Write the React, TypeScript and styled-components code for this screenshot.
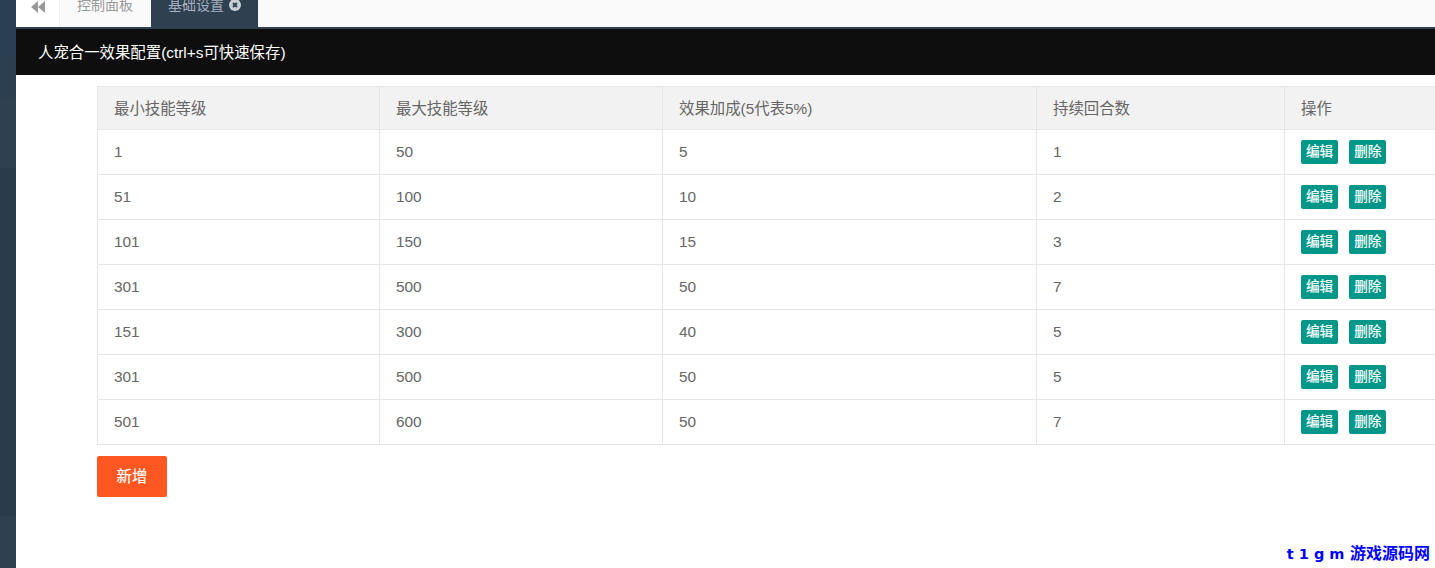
import React from 'react'
import styled, { createGlobalStyle } from 'styled-components'

const rows = [
  { min: '1', max: '50', bonus: '5', turns: '1' },
  { min: '51', max: '100', bonus: '10', turns: '2' },
  { min: '101', max: '150', bonus: '15', turns: '3' },
  { min: '301', max: '500', bonus: '50', turns: '7' },
  { min: '151', max: '300', bonus: '40', turns: '5' },
  { min: '301', max: '500', bonus: '50', turns: '5' },
  { min: '501', max: '600', bonus: '50', turns: '7' },
]

const Global = createGlobalStyle`
  html, body {
    margin: 0;
    height: 100%;
    overflow: hidden;
    background: #fff;
    font-family: "Liberation Sans", "Noto Sans CJK SC", sans-serif;
  }
`

const Page = styled.div`
  width: 1435px;
  height: 568px;
  display: flex;
  overflow: hidden;
  position: relative;
`

const Side = styled.div`
  width: 16px;
  flex: none;
  background: linear-gradient(
    180deg,
    #2a4052 0,
    #2b3f51 99px,
    #2f4050 99px,
    #2f4050 168px,
    #2a3b4b 168px,
    #2a3b4b 516px,
    #2f4050 516px
  );
`

const Main = styled.div`
  flex: 1;
  min-width: 0;
  display: flex;
  flex-direction: column;
`

const TabBar = styled.div`
  height: 27px;
  flex: none;
  display: flex;
  background: #fafafa;
  border-bottom: 2px solid #2f4050;
`

const BackTab = styled.div`
  width: 43px;
  flex: none;
  background: #fff;
  padding-left: 15px;
  box-sizing: border-box;
`

const Tab = styled.div<{ active?: boolean }>`
  box-sizing: border-box;
  padding-left: 17px;
  display: flex;
  align-items: flex-start;
  gap: 5px;
  font-size: 14px;
  line-height: 12px;
  color: ${(p) => (p.active ? '#a7b1c2' : '#999')};
  background: ${(p) => (p.active ? '#2f4050' : '#fafafa')};
  border-left: ${(p) => (p.active ? 'none' : '1px solid #eee')};
  width: ${(p) => (p.active ? '107px' : '92px')};
  overflow: hidden;
`

const TabText = styled.span`
  position: relative;
  top: -1px;
`

const TabClose = styled.svg`
  flex: none;
  margin-top: -1px;
`

const Header = styled.div`
  height: 46px;
  flex: none;
  background: #0e0e0e;
  color: #fff;
  font-size: 15.4px;
  line-height: 47px;
  padding-left: 22px;
`

const Content = styled.div`
  padding: 11px 0 0 81px;
  overflow: hidden;
`

const Table = styled.table`
  width: 1338px;
  border-collapse: collapse;
  table-layout: fixed;
  font-size: 15.4px;
  color: #666;
`

const Th = styled.th<{ w: number }>`
  width: ${(p) => p.w}px;
  height: 43px;
  box-sizing: border-box;
  background: #f2f2f2;
  border: 1px solid #e6e6e6;
  padding: 0 16px 3px;
  font-weight: 400;
  text-align: left;
`

const Td = styled.td`
  height: 45px;
  box-sizing: border-box;
  border: 1px solid #e6e6e6;
  padding: 0 16px;
`

const Actions = styled.div`
  display: flex;
  gap: 11px;
`

const SmallBtn = styled.button`
  height: 24px;
  border: none;
  border-radius: 2px;
  background: #009688;
  color: #fff;
  font-family: inherit;
  font-size: 13.6px;
  line-height: 22px;
  padding: 0 5px;
  -webkit-text-stroke: 0.2px #fff;
`

const AddBtn = styled.button`
  display: block;
  margin-top: 11px;
  width: 70px;
  height: 41px;
  border: none;
  border-radius: 2px;
  background: #ff5722;
  color: #fff;
  font-family: inherit;
  font-size: 15.4px;
  padding: 0 0 3px;
  -webkit-text-stroke: 0.2px #fff;
`

const Mark = styled.div`
  position: absolute;
  right: 5px;
  bottom: 5px;
  color: #0000ff;
  font-family: "DejaVu Sans", "Noto Sans CJK SC", sans-serif;
  font-size: 16px;
  font-weight: 700;
  line-height: 18px;
  white-space: nowrap;
`

const MarkLatin = styled.span`
  font-size: 14.5px;
`

export default function App() {
  return (
    <Page>
      <Global />
      <Side />
      <Main>
        <TabBar>
          <BackTab>
            <svg width="14" height="13" viewBox="0 0 14 13">
              <path d="M7 0v12L0 6z M14 0v12L7 6z" fill="#999" />
            </svg>
          </BackTab>
          <Tab>
            <TabText>控制面板</TabText>
          </Tab>
          <Tab active>
            <TabText>基础设置</TabText>
            <TabClose width="12" height="12" viewBox="0 0 12 12">
              <circle cx="6" cy="6" r="6" fill="#c9ced6" />
              <path d="M4 4l4 4M8 4l-4 4" stroke="#2f4050" strokeWidth="2" />
            </TabClose>
          </Tab>
        </TabBar>
        <Header>人宠合一效果配置(ctrl+s可快速保存)</Header>
        <Content>
          <Table>
            <thead>
              <tr>
                <Th w={282}>最小技能等级</Th>
                <Th w={283}>最大技能等级</Th>
                <Th w={374}>效果加成(5代表5%)</Th>
                <Th w={248}>持续回合数</Th>
                <Th w={151}>操作</Th>
              </tr>
            </thead>
            <tbody>
              {rows.map((r, i) => (
                <tr key={i}>
                  <Td>{r.min}</Td>
                  <Td>{r.max}</Td>
                  <Td>{r.bonus}</Td>
                  <Td>{r.turns}</Td>
                  <Td>
                    <Actions>
                      <SmallBtn>编辑</SmallBtn>
                      <SmallBtn>删除</SmallBtn>
                    </Actions>
                  </Td>
                </tr>
              ))}
            </tbody>
          </Table>
          <AddBtn>新增</AddBtn>
        </Content>
      </Main>
      <Mark>
        <MarkLatin>t 1 g m</MarkLatin> 游戏源码网
      </Mark>
    </Page>
  )
}
